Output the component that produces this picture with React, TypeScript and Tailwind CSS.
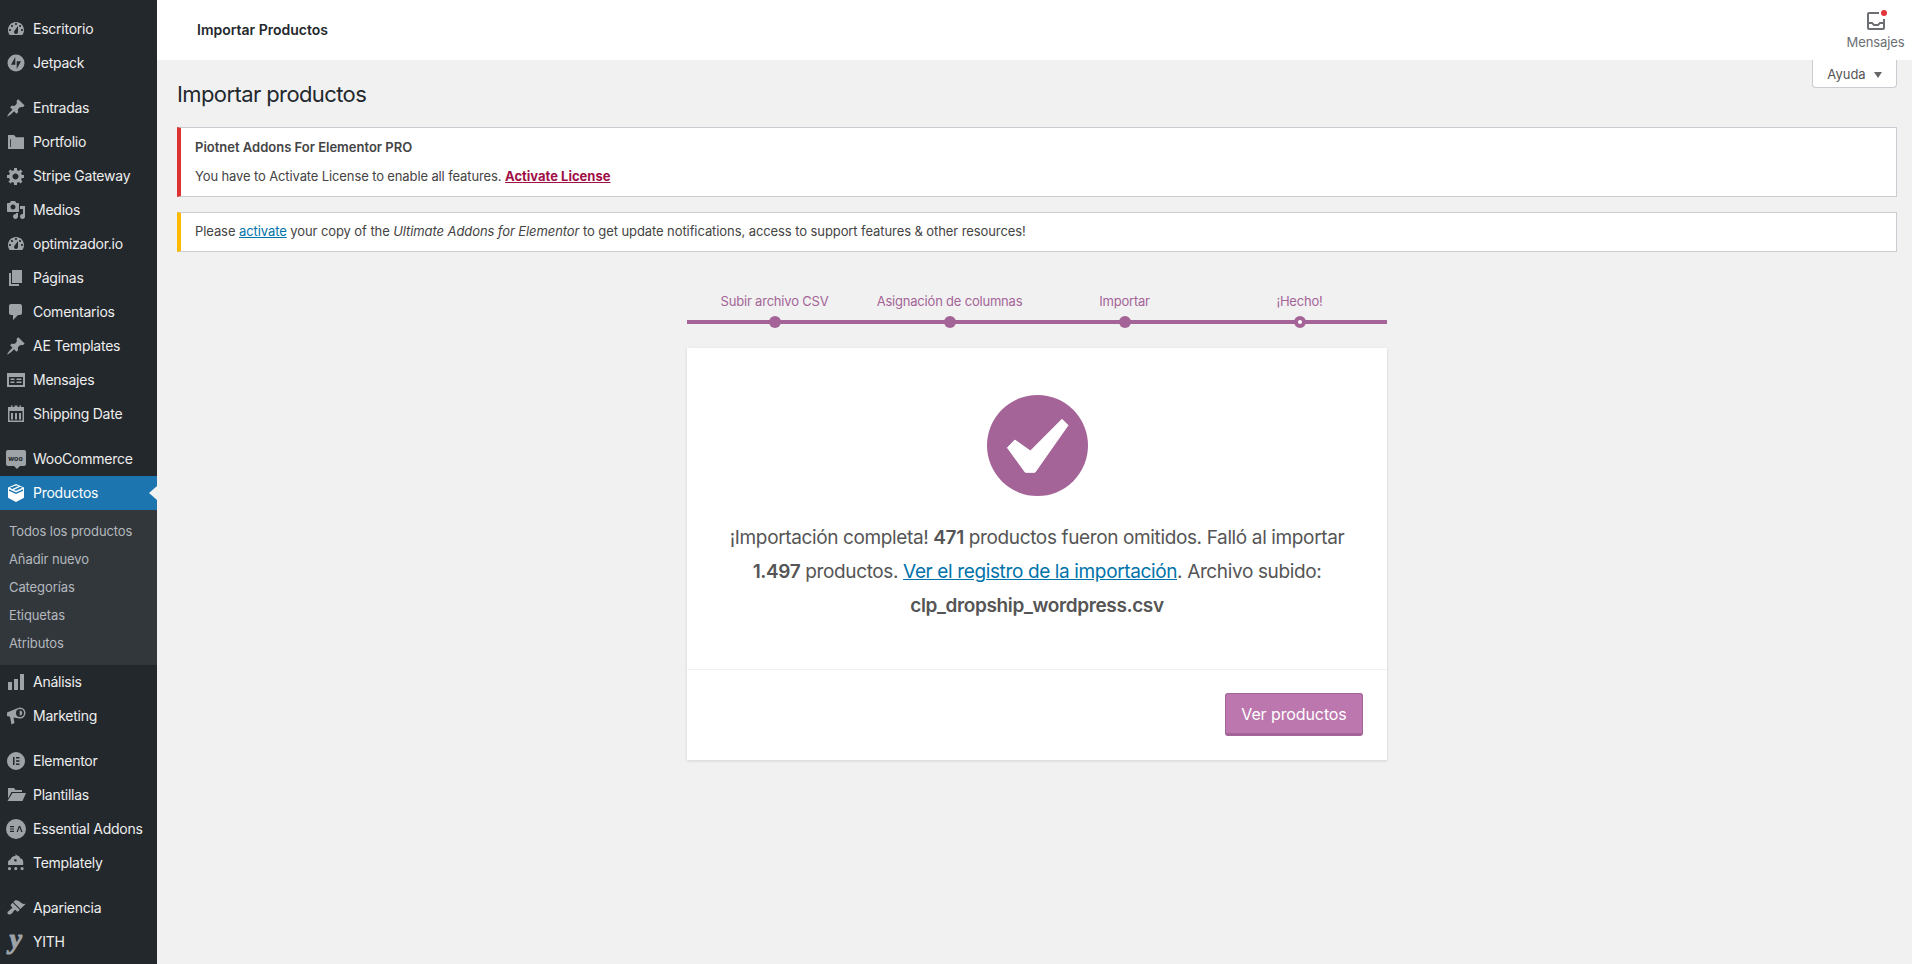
import type { ReactNode } from 'react';

const icons: Record<string, ReactNode> = {
  dashboard: <path fillRule="evenodd" d="M3.76 16h12.48c1.1-1.37 1.76-3.11 1.76-5 0-4.42-3.58-8-8-8s-8 3.58-8 8c0 1.89.66 3.63 1.76 5zM10 4c.55 0 1 .45 1 1s-.45 1-1 1-1-.45-1-1 .45-1 1-1zM6 6c.55 0 1 .45 1 1s-.45 1-1 1-1-.45-1-1 .45-1 1-1zm8 0c.55 0 1 .45 1 1s-.45 1-1 1-1-.45-1-1 .45-1 1-1zm-5.37 5.55L12 7v6c0 1.1-.9 2-2 2s-2-.9-2-2c0-.57.24-1.08.63-1.45zM4 10c.55 0 1 .45 1 1s-.45 1-1 1-1-.45-1-1 .45-1 1-1zm12 0c.55 0 1 .45 1 1s-.45 1-1 1-1-.45-1-1 .45-1 1-1z" />,
  jetpack: <path fillRule="evenodd" d="M10 1.500a8.500 8.500 0 1 0 0 17 8.500 8.500 0 0 0 0-17zM9.300 4v7.800H5L9.300 4zm1.400 12V8.200H15L10.700 16z" />,
  pin: <path d="M10.44 3.02l1.82-1.82 6.36 6.35-1.83 1.82c-1.05-.68-2.48-.57-3.41.36l-.75.75c-.92.93-1.04 2.35-.35 3.41l-1.83 1.82-2.41-2.41-2.8 2.79c-.42.42-3.38 2.71-3.8 2.29s1.86-3.39 2.28-3.81l2.79-2.79L4.1 9.36l1.83-1.82c1.05.69 2.48.57 3.4-.36l.75-.75c.93-.92 1.05-2.35.36-3.41z" />,
  folder: <path fillRule="evenodd" d="M2 3h6l2 2.200h8V17H2V3zm2.200 4.200V15H5V7.200h-.8z" />,
  gear: <path fillRule="evenodd" d="M18 12h-2.18c-.17.7-.44 1.35-.81 1.93l1.54 1.54-2.1 2.1-1.54-1.54c-.58.36-1.23.63-1.91.79V19H8v-2.18c-.68-.16-1.33-.43-1.91-.79l-1.54 1.54-2.12-2.12 1.54-1.54c-.36-.58-.63-1.23-.79-1.91H1V9.03h2.17c.16-.7.44-1.35.8-1.94L2.43 5.55l2.1-2.1 1.54 1.54c.58-.37 1.24-.64 1.93-.81V2h3v2.18c.68.16 1.33.43 1.91.79l1.54-1.54 2.12 2.12-1.54 1.54c.36.59.64 1.24.8 1.94H18V12zm-8.5 1.5c1.66 0 3-1.34 3-3s-1.34-3-3-3-3 1.34-3 3 1.34 3 3 3z" />,
  media: <path fillRule="evenodd" d="M13 11V4c0-.55-.45-1-1-1h-1.67L9 1H5L3.67 3H2c-.55 0-1 .45-1 1v7c0 .55.45 1 1 1h10c.55 0 1-.45 1-1zM7 4.500c1.38 0 2.500 1.120 2.500 2.500S8.380 9.500 7 9.500 4.500 8.380 4.500 7 5.620 4.500 7 4.500zM14 6h5v10.500c0 1.380-1.120 2.500-2.500 2.500S14 17.880 14 16.500s1.120-2.500 2.500-2.500c.17 0 .34.02.5.05V9h-3V6zm-4 8.050V13h2v3.500c0 1.380-1.120 2.500-2.500 2.500S7 17.880 7 16.500 8.120 14 9.500 14c.17 0 .34.02.5.05z" />,
  page: <path d="M6 15V2h10v13H6zm-1 1h8v2H3V5h2v11z" />,
  comment: <path d="M5 2h9c1.100 0 2 .9 2 2v7c0 1.100-.9 2-2 2h-2l-5 5v-5H5c-1.100 0-2-.9-2-2V4c0-1.100.9-2 2-2z" />,
  form: <path fillRule="evenodd" d="M1 3h18v14H1V3zm2 4v8h14V7H3zm1.500 1.500h4V10h-4V8.500zm0 3h4V13h-4v-1.500zm6-3h5V10h-5V8.500zm0 3h5V13h-5v-1.500z" />,
  calendar: <path fillRule="evenodd" d="M5 1.500h1.500V3h2V1.500H11.500V3h2V1.500H15V3h3v15H2V3h3V1.500zM3.500 7v9.500h13V7h-13zM5 9h2v6.500H5V9zm4 0h2v6.500H9V9zm4 0h2v6.500h-2V9z" />,
  cube: <path fillRule="evenodd" d="M10 1l8 3.500v10.200L10 19l-8-4.300V4.500L10 1zM3.600 4.700L10 7.700l6.400-3-1.900-.9-6.400 3-1.700-.8 6.400-3L10 2.500 3.600 4.700zM3 6.300v1.400l7 3.300 7-3.300V6.300l-7 3.300-7-3.300z" />,
  bars: <path d="M18 18V2h-4v16h4zm-6 0V7H8v11h4zm-6 0v-8H2v8h4z" />,
  megaphone: <path fillRule="evenodd" d="M14 1.500a5.500 5.500 0 0 1 0 11l-.5 0L7.500 11.500 8.500 17l-3 1.500L4 10.800 1 10V6.500L12 2c.6-.3 1.300-.5 2-.5zm0 1.500a4 4 0 0 0 0 8 4 4 0 0 0 0-8zm-.3 1.500a2.500 2.500 0 1 1 0 5v-5z" />,
  elementor: <path fillRule="evenodd" d="M10 1a9 9 0 1 0 0 18 9 9 0 0 0 0-18zM7 6h1.500v8H7V6zm3 0h3.500v1.500H10V6zm0 3.250h3.500v1.500H10v-1.500zm0 3.250h3.500V14H10v-1.500z" />,
  openFolder: <path d="M2 3h6l1.500 2H16v2H5.500L2 13.500V3zm4.500 5H20l-3.500 8H1.500l5-8z" />,
  essential: <path fillRule="evenodd" d="M10 0a10 10 0 1 0 0 20 10 10 0 0 0 0-20zM4 7h4v1.200H4V7zm0 2.400h4v1.200H4V9.400zm0 2.400h4V13H4v-1.200zM12.800 7h1.400l2.300 6h-1.300l-1.700-4.400-1.700 4.400h-1.300l2.300-6z" />,
  templately: <path fillRule="evenodd" d="M9.500 1l1.300 1.300a4.800 4.800 0 0 1 3.600 3.300c1.600.2 2.800 1.500 2.800 3.100V12H2V9.500c0-1.500 1-2.700 2.500-3A5 5 0 0 1 9.500 2.900V1zM8 6.200a2.500 2.500 0 0 0 2.500 2.500V6.200H8zM3.500 14a1.600 1.600 0 1 1 0 3.200 1.600 1.600 0 0 1 0-3.200zm6.300 0a1.600 1.600 0 1 1 0 3.200 1.600 1.600 0 0 1 0-3.200zm6.300 0a1.600 1.600 0 1 1 0 3.200 1.600 1.600 0 0 1 0-3.200z" />,
  brush: <path d="M14.480 11.060L7.410 3.990l1.500-1.500c.5-.56 2.300-.47 3.510.32 1.210.8 1.430 1.280 2.910 2.100 1.180.64 2.450 1.260 4.450.85zm-.71.71L6.700 4.700 4.930 6.470c-.39.39-.39 1.020 0 1.410l1.060 1.060c.39.39.39 1.030 0 1.420-.6.6-1.430 1.110-2.210 1.690-.35.26-.7.530-1.010.84C1.430 13.230.91 15.010 2 16c1.070.98 2.780.58 3.860-.5.31-.31.58-.66.85-1.010.57-.78 1.080-1.610 1.680-2.210.39-.39 1.020-.39 1.410 0l1.060 1.060c.39.39 1.020.39 1.410 0z" />,
};

function MenuIcon({ name }: { name: string }) {
  return (
    <svg viewBox="0 0 20 20" fill="currentColor" className="h-[20px] w-[20px] shrink-0">
      {icons[name]}
    </svg>
  );
}

function MenuItem({ icon, label }: { icon: ReactNode; label: string }) {
  return (
    <div className="flex h-[34px] items-center text-[14px] tracking-[-0.25px] text-[#eeeeee]">
      <span className="flex w-[33px] justify-center pr-[2px] text-[#9ea3a8]">{icon}</span>
      <span className="pb-[2px]">{label}</span>
    </div>
  );
}

const group = (rows: [string, string][]) =>
  rows.map(([name, label]) => <MenuItem key={label} icon={<MenuIcon name={name} />} label={label} />);

function Sidebar() {
  return (
    <aside className="flex h-full w-[157px] shrink-0 flex-col gap-[11px] bg-[#23282d] pt-[12px]">
      <div>{group([['dashboard', 'Escritorio'], ['jetpack', 'Jetpack']])}</div>
      <div>
        {group([
          ['pin', 'Entradas'],
          ['folder', 'Portfolio'],
          ['gear', 'Stripe Gateway'],
          ['media', 'Medios'],
          ['dashboard', 'optimizador.io'],
          ['page', 'Páginas'],
          ['comment', 'Comentarios'],
          ['pin', 'AE Templates'],
          ['form', 'Mensajes'],
          ['calendar', 'Shipping Date'],
        ])}
      </div>
      <div>
        <MenuItem
          label="WooCommerce"
          icon={
            <span className="relative mb-[2px] flex h-[16px] w-[20px] items-center justify-center rounded-[2px] bg-[#9ea3a8] text-[7px] leading-none font-bold tracking-normal text-[#23282d]">
              woo
              <span className="absolute top-[16px] left-[8px] h-0 w-0 border-x-[3px] border-t-[3px] border-x-transparent border-t-[#9ea3a8]" />
            </span>
          }
        />
        <div className="relative flex h-[34px] items-center bg-[#1c75ae] text-[14px] tracking-[-0.25px] text-white">
          <span className="flex w-[33px] justify-center pr-[2px]">
            <MenuIcon name="cube" />
          </span>
          <span className="pb-[2px]">Productos</span>
          <span className="absolute top-[10px] right-0 h-0 w-0 border-y-[7px] border-r-[8px] border-y-transparent border-r-[#f1f1f1]" />
        </div>
        <div className="flex flex-col bg-[#32373c] pt-[8px] pb-[7px] text-[13px] tracking-[-0.1px] text-[#b4b9be]">
          {['Todos los productos', 'Añadir nuevo', 'Categorías', 'Etiquetas', 'Atributos'].map((s) => (
            <div key={s} className="flex h-[28px] items-center pl-[9px]">
              {s}
            </div>
          ))}
        </div>
        {group([['bars', 'Análisis'], ['megaphone', 'Marketing']])}
      </div>
      <div>
        {group([
          ['elementor', 'Elementor'],
          ['openFolder', 'Plantillas'],
          ['essential', 'Essential Addons'],
          ['templately', 'Templately'],
        ])}
      </div>
      <div>
        <MenuItem icon={<MenuIcon name="brush" />} label="Apariencia" />
        <MenuItem
          label="YITH"
          icon={
            <span className="mb-[6px] text-[28px] leading-none font-bold italic [-webkit-text-stroke:1px_#9ea3a8] [font-family:'Liberation_Serif',serif]">
              y
            </span>
          }
        />
      </div>
    </aside>
  );
}

function TopBar() {
  return (
    <header className="flex h-[60px] shrink-0 items-center justify-between bg-white pl-[40px]">
      <h2 className="pb-[2px] text-[14px] font-semibold text-[#23282d]">Importar Productos</h2>
      <div className="flex w-[73px] flex-col items-center pt-[4px] text-[13px] tracking-[-0.1px] text-[#6b6f73]">
        <span className="relative h-[22px] w-[20px]">
          <svg viewBox="0 0 20 20" fill="none" stroke="currentColor" strokeWidth="2" className="h-[20px] w-[20px]">
            <path d="M13 2H3a1 1 0 0 0-1 1v14a1 1 0 0 0 1 1h14a1 1 0 0 0 1-1V8" />
            <path d="M2 12h4l2 2h4l2-2h4" />
          </svg>
          <span className="absolute -top-[1px] -right-[1px] h-[6px] w-[6px] rounded-full bg-[#e2353c]" />
        </span>
        Mensajes
      </div>
    </header>
  );
}

function Notices() {
  return (
    <div className="flex flex-col gap-[15px] text-[13px] text-[#444444]">
      <div className="h-[70px] border border-l-4 border-[#c9ccd1] border-l-[#dc3232] bg-white pt-[9px] pl-[14px]">
        <p className="leading-[20px] font-semibold">Piotnet Addons For Elementor PRO</p>
        <p className="mt-[9px] leading-[20px]">
          <span className="tracking-[-0.12px]">You have to Activate License to enable all features.</span>{' '}
          <a className="font-bold text-[#a00f47] underline">Activate License</a>
        </p>
      </div>
      <div className="flex h-[40px] items-center border border-l-4 border-[#c9ccd1] border-l-[#ffb900] bg-white pl-[14px]">
        <p className="tracking-[-0.085px]">
          Please <a className="text-[#0073aa] underline">activate</a> your copy of the{' '}
          <em>Ultimate Addons for Elementor</em> to get update notifications, access to support features &amp; other
          resources!
        </p>
      </div>
    </div>
  );
}

function Stepper() {
  const steps = ['Subir archivo CSV', 'Asignación de columnas', 'Importar', '¡Hecho!'];
  return (
    <ol className="grid w-[700px] grid-cols-4 text-[13px] tracking-[-0.2px] text-[#a46497]">
      {steps.map((step, i) => (
        <li key={step} className="flex flex-col items-center">
          <span className="h-[20px] leading-[20px]">{step}</span>
          <span className="mt-[5px] flex h-[12px] w-full items-center justify-center bg-[linear-gradient(#a46497,#a46497)] bg-[length:100%_4px] bg-center bg-no-repeat">
            <span
              className={
                i === 3
                  ? 'h-[12px] w-[12px] rounded-full border-4 border-[#a46497] bg-white'
                  : 'h-[12px] w-[12px] rounded-full bg-[#a46497]'
              }
            />
          </span>
        </li>
      ))}
    </ol>
  );
}

function DoneCard() {
  return (
    <section className="mt-[20px] flex h-[412px] w-[700px] flex-col bg-white shadow-[0_1px_3px_rgba(0,0,0,0.13)]">
      <div className="flex h-[322px] flex-col items-center border-b border-[#f0f0f1] px-[40px] pt-[47px] text-center">
        <svg viewBox="0 0 101 101" className="h-[101px] w-[101px]">
          <circle cx="50.500" cy="50.500" r="50.500" fill="#a46497" />
          <path d="M75 24.300L81 30.300 48 77.300H38.300L20.400 52.700 27.800 45 43.400 56z" fill="#fff" stroke="#fff" strokeWidth="1" strokeLinejoin="round" />
        </svg>
        <p className="mt-[25px] text-[19px] leading-[34px] tracking-[-0.37px] text-[#555555]">
          ¡Importación completa! <strong className="font-semibold">471</strong> productos fueron omitidos. Falló al
          importar <strong className="font-semibold">1.497</strong> productos.{' '}
          <a className="text-[#0073aa] underline">Ver el registro de la importación</a>. Archivo subido:{' '}
          <strong className="font-semibold">clp_dropship_wordpress.csv</strong>
        </p>
      </div>
      <div className="flex justify-end px-[24px] pt-[23px]">
        <button className="h-[43px] w-[138px] rounded-[3px] border border-b-[3px] border-[#a36597] bg-[#bb77ae] pt-[1px] text-[16px] tracking-[-0.1px] text-white">
          Ver productos
        </button>
      </div>
    </section>
  );
}

export default function App() {
  return (
    <div className="flex h-screen overflow-hidden bg-[#f1f1f1] [font-family:Inter,'Liberation_Sans',sans-serif]">
      <Sidebar />
      <main className="flex min-w-0 flex-1 flex-col">
        <TopBar />
        <div className="flex flex-col pr-[15px] pl-[20px]">
          <div className="flex h-[67px] shrink-0 items-start justify-between">
            <h1 className="pt-[18px] text-[22px] leading-[32px] tracking-[-0.6px] text-[#23282d]">Importar productos</h1>
            <button className="flex h-[28px] w-[85px] items-center justify-center gap-[8px] rounded-b-[4px] border border-t-0 border-[#c9ccd1] bg-white pt-[2px] text-[13px] text-[#555555]">
              Ayuda
              <span className="h-0 w-0 border-x-[4px] border-t-[6px] border-x-transparent border-t-[#666666]" />
            </button>
          </div>
          <Notices />
          <div className="mt-[39px] flex flex-col items-center">
            <Stepper />
            <DoneCard />
          </div>
        </div>
      </main>
    </div>
  );
}
